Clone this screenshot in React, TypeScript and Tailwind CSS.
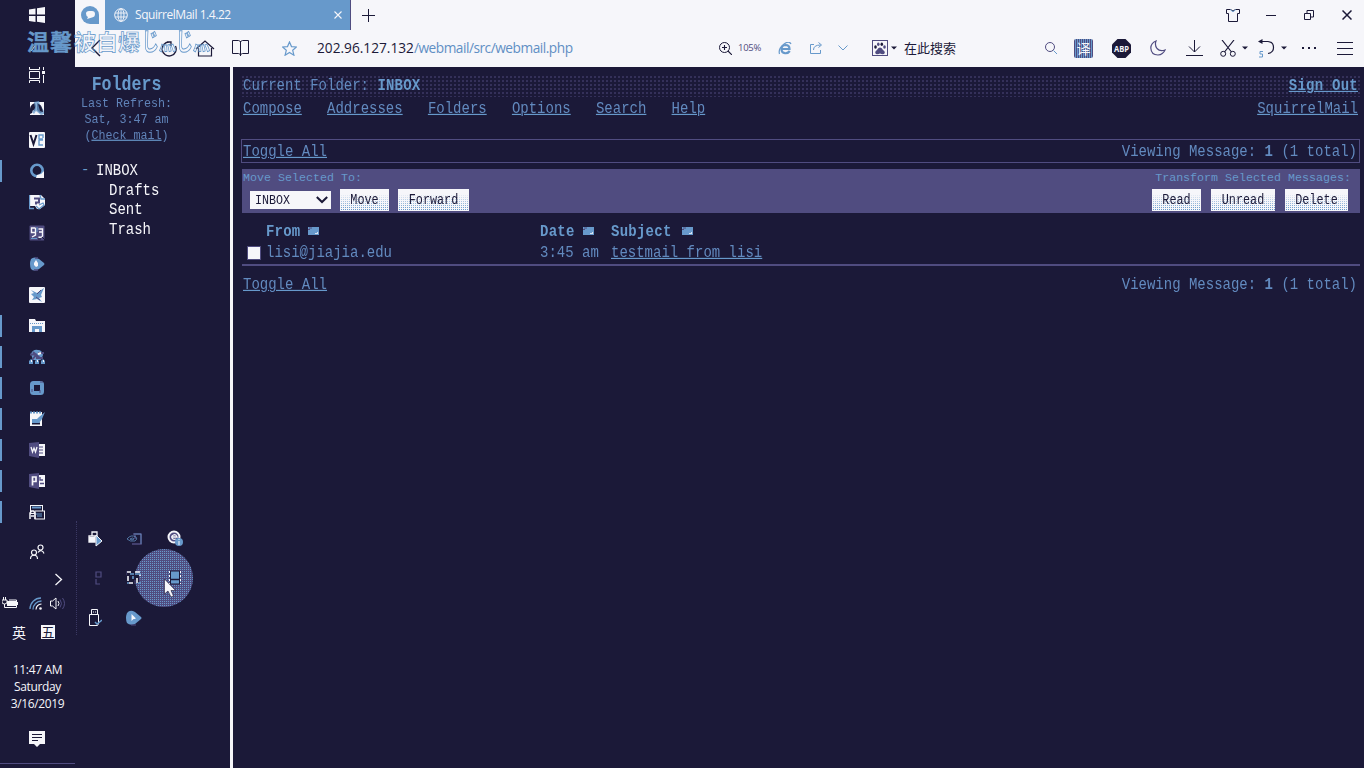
import React from "react";

const B = "#6799cb";
const W = "#f6f6fa";
const P = "#504c80";
const D = "#1b1938";

type MonoProps = { children: React.ReactNode; className?: string };

function Mono({ children, className = "" }: MonoProps) {
  return (
    <span className={`inline-block origin-center scale-y-[1.17] whitespace-pre ${className}`}>{children}</span>
  );
}

function Link({ children }: { children: React.ReactNode }) {
  return <a className="underline decoration-1 underline-offset-1 decoration-[#6799cb]">{children}</a>;
}

function Svg({ children, w = 16, h = 16, vb }: { children: React.ReactNode; w?: number; h?: number; vb?: string }) {
  return (
    <svg width={w} height={h} viewBox={vb ?? `0 0 ${w} ${h}`} fill="none" className="block shrink-0">
      {children}
    </svg>
  );
}

const taskIcons: { bar: boolean; icon: React.ReactNode }[] = [
  {
    bar: false,
    icon: (
      <>
        <rect x="1" y="1" width="14" height="13" fill={W} />
        <path d="M1 9c0-4 2-6 5-7l1 3-1 5-2-1-1 3-2 1z" fill={D} />
        <path d="M8 2c4 1 5 4 6 9l-3 1-3-3z" fill={D} />
        <path d="M5 1l5-1 1 4 4 6v3l-3 1-5-4-2 3-2-2 3-4z" fill={B} opacity=".75" />
        <path d="M9 3c3 1 4 4 5 8l-3-1z" fill={D} />
      </>
    ),
  },
  {
    bar: false,
    icon: (
      <>
        <rect width="16" height="16" rx="1" fill={W} />
        <path d="M1.500 3l3 9 3-9" stroke={D} strokeWidth="2" />
        <path d="M10 7V3h4v3M10 7h4M14 8h-4v5h4" stroke={B} strokeWidth="1.400" />
      </>
    ),
  },
  {
    bar: true,
    icon: (
      <>
        <circle cx="8" cy="7.500" r="5.700" stroke={B} strokeWidth="2.600" />
        <path d="M15 8v7H7l1-3 4-1z" fill={W} />
      </>
    ),
  },
  {
    bar: false,
    icon: (
      <>
        <path d="M0 1h12l4 4v6l-5 4H8l-2-3H0z" fill={W} />
        <path d="M.5 1v14M0 14.500h5M11 1l1 4h4M7 12l3 3 5-4-1-2-4 2" stroke={B} strokeWidth="1.300" />
        <path d="M5 4.500h5v4H7v2" stroke={P} strokeWidth="2" />
      </>
    ),
  },
  {
    bar: false,
    icon: (
      <>
        <rect x="0.500" y="0.500" width="15" height="15" rx="1" fill={P} />
        <path d="M6.500 3h-4v4.500h4V3v7L3 12M9.500 4h4v7q-1 2-4 1M10 7h3" stroke={W} strokeWidth="1.400" />
        <path d="M2 13.500h6M8 2v5" stroke={B} />
        <path d="M13 12l3 3M9 14h3" stroke={D} />
      </>
    ),
  },
  {
    bar: false,
    icon: (
      <>
        <path d="M2 3q3-3 8 0l5 4q1 1 0 2l-5 4q-5 3-8 0-2-5 0-10z" fill={B} />
        <path d="M5 7l2-3 2 3v3l-2 1-2-2z" fill={W} />
        <path d="M5 14h4M6 2h3" stroke={P} strokeWidth="1.500" />
      </>
    ),
  },
  {
    bar: false,
    icon: (
      <>
        <rect width="16" height="16" rx="1" fill={W} />
        <path d="M2 3l6 3 7-5-3 7 1 2-3 1 3 4-5-3-5 1 2-3-3-3 3-1z" fill={B} />
        <path d="M8 7l4-4M7 10l4 3" stroke={P} />
      </>
    ),
  },
  {
    bar: true,
    icon: (
      <>
        <path d="M0 1h6l1 2h9v11H0z" fill={W} />
        <path d="M3 14V8h10v6h-3v-3H6v3z" fill={B} />
        <path d="M1 5.500h14" stroke={B} strokeDasharray="1 1" />
      </>
    ),
  },
  {
    bar: true,
    icon: (
      <>
        <path d="M2 5q2-5 7-4 4 0 5 5l-2 5H4z" fill={B} />
        <path d="M1 5.500h7M9 4h6M4 3l8 7M3 11l4-5M7 9h7" stroke={P} strokeWidth="2" />
        <path d="M0 12l2-2 2 2v3H0zM6 12l2-2 2 2v3H6zM12 12l2-2 2 2v3h-4z" fill={B} />
        <path d="M2 12h1M8 12h1M14 12h1M9 5l3-1" stroke={W} strokeWidth="2" />
      </>
    ),
  },
  {
    bar: true,
    icon: (
      <>
        <rect x="3" y="3" width="10" height="10" rx="1.500" stroke={B} strokeWidth="4" />
        <path d="M11 2h3M3 9v3M11 10v3" stroke={P} />
      </>
    ),
  },
  {
    bar: true,
    icon: (
      <>
        <path d="M1 1h12v14H1z" fill={W} />
        <path d="M1 1.500h12" stroke={B} strokeWidth="2" strokeDasharray="2 1" />
        <path d="M3 11.500h8v2H3z" fill={D} />
        <path d="M3 8h5l2-2 6-5-3 7-3 4H3z" fill={B} />
      </>
    ),
  },
  {
    bar: true,
    icon: (
      <>
        <path d="M0 1l10-1v16L0 14z" fill={P} />
        <rect x="10" y="2" width="6" height="12" fill={W} />
        <path d="M10 5h4M10 8h4M10 11h4" stroke={P} />
        <path d="M2 5l1.500 5L5 6l1.500 4L8 5" stroke={W} strokeWidth="1.300" />
      </>
    ),
  },
  {
    bar: true,
    icon: (
      <>
        <path d="M0 1l10-1v16L0 14z" fill={P} />
        <rect x="10" y="2" width="6" height="12" fill={W} />
        <path d="M11 4v3h3M11 10.500h4" stroke={P} strokeWidth="1.300" />
        <path d="M3.500 12.500V4h3.500v4.500H3.500" stroke={W} strokeWidth="1.700" />
      </>
    ),
  },
  {
    bar: true,
    icon: (
      <>
        <rect x="1.500" y="1.500" width="12" height="8" stroke={W} />
        <path d="M3 3.500h9" stroke={B} strokeWidth="2" />
        <rect x="6" y="7" width="9.500" height="8" fill={D} stroke={W} />
        <path d="M7 10h6M8 12h5" stroke={B} />
        <path d="M1 15V9l1.500-2h2L6 9v6M2 12h3" stroke={W} strokeWidth="1.500" />
      </>
    ),
  },
];

function Taskbar() {
  return (
    <aside className="flex h-[768px] w-[75px] shrink-0 flex-col items-center text-[#f6f6fa]">
      <div className="flex h-[30px] w-full items-center pl-[29px]">
        <Svg>
          <path d="M0 2.500L6.500 1.500v6H0zM8 1.200L16 0v7.500H8zM0 9h6.500v6L0 14zM8 9h8v7l-8-1.200z" fill={W} />
        </Svg>
      </div>
      <div className="flex h-[29px] w-full items-center pl-[29px]">
        <Svg>
          <path d="M6 9l-4 5" stroke={W} />
        </Svg>
      </div>
      <div className="flex h-[34px] w-full items-center pb-[2px] pl-[29px]">
        <Svg>
          <path d="M.5 0v2.500h10V0M.5 16v-2.500h10V16M.5 4.500h10v7H.5zM14.500 0v3M14.500 8v8" stroke={W} />
          <rect x="13" y="4" width="3" height="3" fill={W} />
        </Svg>
      </div>
      {taskIcons.map((t, i) => (
        <div key={i} className="flex h-[31px] w-full items-center">
          <div className={t.bar ? "h-[22px] w-[2px] bg-[#6799cb]" : "h-[22px] w-[2px]"} />
          <div className="ml-[27px]">
            <Svg>{t.icon}</Svg>
          </div>
        </div>
      ))}
      <div className="flex h-[44px] w-full items-center pt-[6px] pl-[30px]">
        <Svg w={15} h={16}>
          <circle cx="4" cy="8.500" r="2.500" stroke={W} strokeWidth="1.200" />
          <circle cx="10.500" cy="3.500" r="2.500" stroke={W} strokeWidth="1.200" />
          <path d="M.5 15c0-5 7-5 7 0M8 8.500c2-3 5-2 6 1" stroke={W} strokeWidth="1.200" />
        </Svg>
      </div>
      <div className="flex h-[16px] w-full items-center pl-[54px]">
        <Svg w={9} h={13}>
          <path d="M1.500 1l6 5.500-6 5.500" stroke={W} strokeWidth="1.300" />
        </Svg>
      </div>
      <div className="flex h-[32px] w-full items-center pl-[2px]">
        <Svg w={16} h={12}>
          <path d="M0 3h5v2a2.500 2 0 01-5 0zM1.500 0v3M3.500 0v3M2.500 7v3.500h12V3H7" stroke={W} />
          <rect x="5" y="4" width="9" height="5" fill={W} />
          <path d="M15.500 5v3" stroke={W} />
        </Svg>
        <div className="ml-[11px]">
          <Svg w={13} h={13}>
            <path d="M1 12A11 11 0 0112 1M4 12.500A8.500 8.500 0 0112.500 4" stroke={B} strokeWidth="1.300" />
            <path d="M7 12.500A6 6 0 0112.500 7" stroke={W} strokeWidth="1.200" />
            <circle cx="11.500" cy="11.500" r="1.300" fill={W} />
          </Svg>
        </div>
        <div className="ml-[8px]">
          <Svg w={16} h={13}>
            <path d="M.5 4h2L6 1v11L2.500 9h-2z" stroke={W} />
            <path d="M8 4q2 2.500 0 5" stroke={W} />
            <path d="M10 2.500q3 4 0 8M12.500 1q4 5.500 0 11" stroke={P} />
          </Svg>
        </div>
      </div>
      <div className="flex h-[26px] w-full items-center pl-[12px] font-['Noto_Sans_CJK_SC',sans-serif] text-[14px] leading-[14px]">
        <span className="w-[14px]">英</span>
        <span className="ml-[15px] flex h-[14px] w-[14px] items-center justify-center bg-[#f6f6fa] text-[13px] text-[#1b1938]">五</span>
      </div>
      <div className="mt-[16px] flex w-full flex-col items-center font-['Open_Sans',sans-serif] text-[12px] leading-[17px] tracking-[-0.35px]">
        <span>11:47 AM</span>
        <span>Saturday</span>
        <span>3/16/2019</span>
      </div>
      <div className="mt-[19px] flex w-full pl-[29px]">
        <Svg w={16} h={16}>
          <path d="M0 0h16v13h-5l-3 3-3-3H0z" fill={W} />
          <path d="M3 3.500h10M3 6.500h10M3 9.500h6" stroke={D} />
        </Svg>
      </div>
      <div className="mt-[16px] h-px w-full bg-[#504c80]" />
    </aside>
  );
}

function Caret() {
  return (
    <Svg w={6} h={4}>
      <path d="M0 .5h6L3 3.500z" fill={D} />
    </Svg>
  );
}

function Chrome() {
  return (
    <header className="flex h-[67px] flex-col bg-[#f6f6fa] font-['Open_Sans',sans-serif] text-[#1b1938]">
      <div className="flex h-[30px] items-center">
        <div className="w-[30px] pl-[6px]">
          <Svg w={18} h={18}>
            <path d="M18 9v9H9A9 9 0 1118 9z" fill={B} />
            <path d="M5 7.500Q5 5 8 5h3q3 0 3 3t-3 3.500L6 13l1-2Q5 10 5 7.500z" fill={W} />
          </Svg>
        </div>
        <div className="flex h-[30px] w-[246px] items-center border-r border-[#504c80] bg-[#6799cb] pl-[9px] text-[#f6f6fa]">
          <Svg w={14} h={14}>
            <circle cx="7" cy="7" r="6.300" stroke={W} />
            <ellipse cx="7" cy="7" rx="3" ry="6.300" stroke={W} />
            <path d="M7 1v12M1 5h12M1 9h12" stroke={W} strokeWidth="0.900" />
          </Svg>
          <span className="ml-[7px] w-[199px] text-[12px] leading-[16px] tracking-[-0.45px]">SquirrelMail 1.4.22</span>
          <Svg w={8} h={8}>
            <path d="M.5.5l7 7M7.500.5l-7 7" stroke={W} strokeWidth="1.100" />
          </Svg>
        </div>
        <div className="ml-[11px]">
          <Svg w={13} h={13}>
            <path d="M6.500 0v13M0 6.500h13" stroke={D} />
          </Svg>
        </div>
        <div className="ml-auto flex items-center">
          <Svg w={14} h={13}>
            <path d="M.5.5h4q2.500 3 5 0h4v4h-2v8h-9v-8h-2z" stroke={D} />
            <path d="M4.500.5q2.500 4 5 0" stroke={B} />
          </Svg>
          <div className="ml-[26px]">
            <Svg w={10} h={11}>
              <path d="M0 5.500h10" stroke={D} />
            </Svg>
          </div>
          <div className="ml-[28px]">
            <Svg w={10} h={10}>
              <path d="M.5 3.500h6v6h-6zM3 3V.5h6.500V7H7" stroke={D} />
            </Svg>
          </div>
          <div className="mr-[12px] ml-[28px]">
            <Svg w={10} h={10}>
              <path d="M.5.5l9 9M9.500.5l-9 9" stroke={D} strokeWidth="1.500" />
            </Svg>
          </div>
        </div>
      </div>
      <div className="flex h-[36px] items-center">
        <div className="ml-[16px]">
          <Svg w={10} h={18}>
            <path d="M9 1L1 9l8 8" stroke={D} strokeWidth="1.400" />
          </Svg>
        </div>
        <div className="ml-[60px]">
          <Svg w={16} h={17}>
            <path d="M8.500 2a7 7 0 106 4M6 2h4v4" stroke={D} strokeWidth="1.300" />
          </Svg>
        </div>
        <div className="ml-[18px]">
          <Svg w={20} h={18}>
            <path d="M1 10l9-8 9 8M3.500 9v8h13V9" stroke={D} strokeWidth="1.200" />
          </Svg>
        </div>
        <div className="ml-[17px]">
          <Svg w={17} h={16}>
            <path d="M.5.5h6l2 1 2-1h6v13h-6l-2 1-2-1h-6zM8.500 1v15" stroke={D} />
          </Svg>
        </div>
        <div className="ml-[33px]">
          <Svg w={15} h={15} vb="0 0 15 15">
            <path d="M7.500 1l2 4.600 5 .4-3.800 3.300 1.200 4.900-4.400-2.700-4.400 2.700 1.200-4.900L.5 6l5-.4z" stroke={B} strokeWidth="1.200" />
          </Svg>
        </div>
        <span className="ml-[20px] w-[402px] text-[13.700px] leading-[18px] whitespace-nowrap">
          202.96.127.132<span className="tracking-[-0.480px] text-[#5f8fc4]">/webmail/src/webmail.php</span>
        </span>
        <Svg w={13} h={13}>
          <circle cx="5.500" cy="5.500" r="5" stroke={D} />
          <path d="M9 9l4 4M3 5.500h5M5.500 3v5" stroke={D} strokeWidth="1.100" />
        </Svg>
        <span className="ml-[6px] w-[40px] text-[9.500px] leading-[12px] tracking-[-0.3px] text-[#504c80]">105%</span>
        <Svg w={14} h={13}>
          <path d="M11.800 9Q10 11.500 7 11.200 3.500 10.700 3.500 7T7.500 3q4 0 4 4H4" stroke={B} strokeWidth="2.200" />
          <path d="M1.500 12Q0 7 5.500 2.500T13 2" stroke={B} strokeWidth="1.200" />
        </Svg>
        <div className="ml-[18px]">
          <Svg w={12} h={12}>
            <path d="M4 2.500H.5v9h10V8M3.500 8q0-5 7-5M8.500.5l3 2.500-3 2.500" stroke={B} />
          </Svg>
        </div>
        <div className="ml-[16px]">
          <Svg w={10} h={6}>
            <path d="M.5.5L5 5 9.500.5" stroke={B} />
          </Svg>
        </div>
        <div className="ml-[24px]">
          <Svg w={16} h={16}>
            <rect x=".5" y=".5" width="15" height="15" stroke={P} />
            <path d="M4 14q-2-2 1-4 1-2.500 3-2.500t3 2.500q3 2 1 4-2 .5-4-.5-2 1-4 .5z" fill={P} />
            <ellipse cx="3.500" cy="7" rx="1.300" ry="1.700" fill={D} />
            <ellipse cx="6.300" cy="4.200" rx="1.300" ry="1.800" fill={P} />
            <ellipse cx="9.800" cy="4.200" rx="1.300" ry="1.800" fill={D} />
            <ellipse cx="12.500" cy="7" rx="1.300" ry="1.700" fill={P} />
          </Svg>
        </div>
        <div className="ml-[3px]"><Caret /></div>
        <span className="ml-[7px] w-[141px] font-['Noto_Sans_CJK_SC',sans-serif] text-[13px] leading-[18px]">在此搜索</span>
        <Svg w={12} h={13}>
          <circle cx="5" cy="5" r="4.500" stroke={P} />
          <path d="M8.500 8.500L12 12" stroke={B} />
        </Svg>
        <div className="ml-[17px] flex h-[19px] w-[19px] items-center justify-center rounded-[2px] bg-[#504c80] bg-[conic-gradient(#6799cb_50%,transparent_0)] bg-[size:2px_2px] font-['Noto_Sans_CJK_SC',sans-serif] text-[14px] leading-[18px] text-[#f6f6fa]">译</div>
        <div className="ml-[19px]">
          <Svg w={19} h={19}>
            <path d="M5.500 0h8L19 5.500v8L13.500 19h-8L0 13.500v-8z" fill={D} />
            <text x="9.500" y="13" textAnchor="middle" fontSize="9" fontWeight="700" fontFamily="Open Sans, sans-serif" textLength="15" lengthAdjust="spacingAndGlyphs" fill={W}>ABP</text>
          </Svg>
        </div>
        <div className="ml-[19px]">
          <Svg w={16} h={16}>
            <path d="M6 1Q1 3 .8 8q.4 7 7.200 7 5-.3 7-5-5 2-8-1.500Q4.500 5 6 1z" stroke={P} strokeWidth="1.200" />
          </Svg>
        </div>
        <div className="ml-[20px]">
          <Svg w={17} h={16}>
            <path d="M8.500 0v12M3 6.500L8.500 12 14 6.500M0 15.500h17" stroke={D} />
          </Svg>
        </div>
        <div className="ml-[17px]">
          <Svg w={16} h={17}>
            <path d="M2 0l9.500 12M14 0L4.500 12" stroke={D} strokeWidth="1.200" />
            <circle cx="3.200" cy="13.800" r="2.500" stroke={D} />
            <circle cx="12.800" cy="13.800" r="2.500" stroke={D} />
          </Svg>
        </div>
        <div className="ml-[6px]"><Caret /></div>
        <div className="ml-[10px]">
          <Svg w={17} h={19}>
            <path d="M2 2.500h8q5.500.5 5.500 6 0 5-5.500 6" stroke={D} strokeWidth="1.200" />
            <path d="M0 2.500L4.500 0v5z" fill={D} />
            <path d="M5 12.500H2V15h2.500v3H1" stroke={B} />
          </Svg>
        </div>
        <div className="ml-[6px]"><Caret /></div>
        <div className="ml-[15px]">
          <Svg w={14} h={3}>
            <path d="M0 0h2v2H0zM6 0h2v2H6zM12 0h2v2h-2z" fill={D} />
          </Svg>
        </div>
        <div className="ml-[21px]">
          <Svg w={16} h={13}>
            <path d="M0 .5h16M0 6.500h16M0 12.500h16" stroke={D} />
          </Svg>
        </div>
      </div>
    </header>
  );
}

function Tray() {
  return (
    <div className="mt-[282px] ml-px grid h-[114px] w-[119px] grid-cols-[39px_39px_40px] grid-rows-[35px_43px_37px] border-l border-dotted border-[#504c80]/60">
      <div className="flex items-center justify-center pr-[2px]">
        <Svg>
          <path d="M4 1h5v4H4zM1 5h6v6H1z" stroke={W} strokeWidth="1.300" />
          <rect x="1" y="6" width="6" height="5" fill={W} />
          <path d="M8 4l6 6-6 5z" fill={B} stroke={W} />
        </Svg>
      </div>
      <div className="flex items-center justify-center pr-[3px]">
        <Svg>
          <path d="M7 3h8v10H6M9 4v4" stroke={P} strokeWidth="1.500" />
          <path d="M1 8q4-5 9-2 2 2-1 4-5 1-8-2zM4 8q3-2 4 0-2 2-4 0zM8 3h7v10" stroke={B} strokeWidth=".7" />
        </Svg>
      </div>
      <div className="flex items-center justify-center pr-px pb-px">
        <Svg>
          <circle cx="7" cy="7" r="5.500" fill={P} stroke={W} strokeWidth="2" />
          <path d="M5 7h5q-1-3-3.500-2T5 8q1 2 4 1" stroke={W} strokeWidth="1.300" />
          <circle cx="12" cy="12" r="4" fill={B} />
          <path d="M12 9v1M12 11v4" stroke={W} />
        </Svg>
      </div>
      <div className="flex items-center justify-end pr-[13px]">
        <Svg w={10} h={14}>
          <path d="M3 1h5v5H3zM3 8v5h4M8 1v4" stroke={P} strokeWidth="1.200" />
        </Svg>
      </div>
      <div className="z-10 flex items-center justify-center pr-[3px]">
        <Svg>
          <rect x="3" y="3" width="10" height="10" fill={D} />
          <path d="M1 2h4M9 2h5M3 13h4M13 5h2M2 6v5M11 8v5" stroke={W} strokeWidth="1.600" />
          <path d="M4 4h4M7 6v3M9 4h6M12 13h3M1 13h2" stroke={B} strokeWidth="1.600" />
          <path d="M0 1v4M9 10v4M15 8v4" stroke={P} />
        </Svg>
      </div>
      <div className="relative flex items-center justify-center pr-px">
        <div className="absolute top-[-7px] left-[-20px] h-[58px] w-[58px] rounded-full bg-[#504c80] bg-[conic-gradient(#6799cb_25%,transparent_0)] bg-[size:2px_2px]" />
        <div className="relative">
          <Svg w={12} h={15}>
            <rect x="1.500" y="1" width="9" height="13" fill={B} stroke={D} />
            <path d="M.5 1v13M11.500 1v13" stroke={W} strokeDasharray="2 2" />
            <path d="M2 9.500h8" stroke={D} strokeWidth="1.500" />
          </Svg>
        </div>
        <div className="absolute top-[23px] left-[9px] z-20">
          <Svg w={12} h={19}>
            <path d="M.5 0v15l3.500-3 3 6 2.500-1-2.500-5.500h4.500z" fill={W} stroke={D} strokeWidth=".6" />
          </Svg>
        </div>
      </div>
      <div className="flex items-center justify-center pr-[3px]">
        <Svg w={14} h={17}>
          <path d="M3.500 5.500v-5h6v5M1.500 5.500h9v9l-1 2h-8z" stroke={W} />
          <path d="M5 3h1M7 3h1" stroke={W} />
          <path d="M7 13l2 2 5-4" stroke={B} strokeWidth="1.500" />
        </Svg>
      </div>
      <div className="flex items-center justify-center pr-[3px]">
        <Svg>
          <path d="M1 3q3-4 8-1l6 5q1 1 0 2l-6 5q-5 2-8-1-2-5 0-10z" fill={B} />
          <path d="M5.500 4v7l2-2h2V8z" fill={W} />
          <path d="M5 15h5" stroke={P} />
        </Svg>
      </div>
    </div>
  );
}

function FolderFrame() {
  return (
    <nav className="flex h-[701px] w-[155px] shrink-0 flex-col text-[14px] text-[#6799cb]">
      <div className="mt-[7px] w-[103px] text-center">
        <div className="text-[16.600px] leading-[21px] font-bold"><Mono>Folders</Mono></div>
        <div className="text-[11.700px] leading-[16px] text-[#6083b8]">
          <div><Mono>Last Refresh:</Mono></div>
          <div><Mono>Sat, 3:47 am</Mono></div>
          <div><Mono>(<Link>Check mail</Link>)</Mono></div>
        </div>
      </div>
      <div className="mt-[18px] flex flex-col leading-[19.500px] text-[#f6f6fa]">
        <div className="flex pl-[6px]">
          <span className="w-[15px] text-[#6799cb]">-</span>
          <Mono>INBOX</Mono>
        </div>
        <div className="pl-[34px]"><Mono>Drafts</Mono></div>
        <div className="pl-[34px]"><Mono>Sent</Mono></div>
        <div className="pl-[34px]"><Mono>Trash</Mono></div>
      </div>
      <Tray />
    </nav>
  );
}

function Btn({ children, className }: { children: React.ReactNode; className: string }) {
  return (
    <button className={`relative flex h-[22px] items-center justify-center bg-[#f6f6fa] text-[11.800px] text-[#1b1938] ${className}`}>
      <span className="absolute inset-0 bg-[conic-gradient(#6799cb_25%,transparent_0)] bg-[size:2px_2px] [mask-image:linear-gradient(to_bottom,transparent_20%,#000_90%)]" />
      <Mono className="relative">{children}</Mono>
    </button>
  );
}

function SortIcon() {
  return (
    <Svg w={11} h={8}>
      <rect width="11" height="8" fill={B} />
      <path d="M1 1h3M0 2.500h2" stroke={P} />
      <path d="M9.500 5v2M7 6.500h2" stroke={W} strokeWidth=".8" />
    </Svg>
  );
}

function ToggleRow() {
  return (
    <>
      <Mono><Link>Toggle All</Link></Mono>
      <Mono>Viewing Message: <b>1</b> (1 total)</Mono>
    </>
  );
}

function MailFrame() {
  return (
    <main className="flex h-[701px] min-w-0 flex-1 flex-col pr-[4px] pl-[8px] text-[14px] leading-[20px] text-[#628abf]">
      <div className="mt-[8px] flex h-[22px] items-center justify-between bg-[radial-gradient(circle,#504c80_0.6px,transparent_0.8px)] bg-[size:4px_4px] pr-[2px] pb-[2px] pl-[2px]">
        <Mono>Current Folder: <b className="tracking-[0.2px] text-[#6799cb]">INBOX</b></Mono>
        <Mono className="font-bold tracking-[0.250px] text-[#6799cb]"><Link>Sign Out</Link></Mono>
      </div>
      <div className="flex h-[24px] items-center justify-between pr-[2px] pb-[2px] pl-[2px]">
        <Mono>
          <Link>Compose</Link>{"   "}<Link>Addresses</Link>{"   "}<Link>Folders</Link>{"   "}<Link>Options</Link>{"   "}<Link>Search</Link>{"   "}<Link>Help</Link>
        </Mono>
        <Mono><Link>SquirrelMail</Link></Mono>
      </div>
      <div className="mt-[18px] flex h-[24px] items-center justify-between border border-[#504c80] pr-[2px] pl-px">
        <ToggleRow />
      </div>
      <div className="mt-[6px] ml-px flex h-[44px] flex-col bg-[#504c80]">
        <div className="flex h-[19px] items-center justify-between pr-[9px] pb-px pl-px text-[11.670px] text-[#6799cb]">
          <span>Move Selected To:</span>
          <span>Transform Selected Messages:</span>
        </div>
        <div className="flex h-[23px] items-center pr-[12px] pl-[8px]">
          <div className="flex h-[18px] w-[81px] items-center justify-between bg-[#f6f6fa] pr-[3px] pl-[5px] text-[11.670px] text-[#1b1938]">
            <Mono>INBOX</Mono>
            <Svg w={12} h={8}>
              <path d="M.8 1L6 6l5.200-5" stroke={D} strokeWidth="2" />
            </Svg>
          </div>
          <Btn className="ml-[9px] w-[49px]">Move</Btn>
          <Btn className="ml-[9px] w-[71px]">Forward</Btn>
          <Btn className="ml-auto w-[49px]">Read</Btn>
          <Btn className="ml-[10px] w-[64px]">Unread</Btn>
          <Btn className="ml-[10px] w-[63px]">Delete</Btn>
        </div>
      </div>
      <div className="mt-[7px] ml-px grid grid-cols-[24px_274px_71px_1fr] grid-rows-[21px_22px] items-center border-b-2 border-[#504c80] pb-px">
        <span />
        <div className="flex items-center gap-[8px] font-bold tracking-[0.2px] text-[#6799cb]"><Mono>From</Mono><SortIcon /></div>
        <div className="flex items-center gap-[8px] font-bold tracking-[0.250px] text-[#6799cb]"><Mono>Date</Mono><SortIcon /></div>
        <div className="flex items-center gap-[10px] font-bold tracking-[0.250px] text-[#6799cb]"><Mono>Subject</Mono><SortIcon /></div>
        <div className="flex items-center pl-[5px]">
          <div className="mt-[2px] h-[14px] w-[14px] border border-[#504c80] bg-[#f6f6fa]" />
        </div>
        <Mono>lisi@jiajia.edu</Mono>
        <Mono>3:45 am</Mono>
        <Mono><Link>testmail from lisi</Link></Mono>
      </div>
      <div className="mt-[6px] flex h-[24px] items-center justify-between pr-[3px] pl-[2px]">
        <ToggleRow />
      </div>
    </main>
  );
}

export default function App() {
  return (
    <div className="relative flex h-[768px] w-[1364px] overflow-hidden bg-[#1b1938]">
      <Taskbar />
      <div className="flex min-w-0 flex-1 flex-col">
        <Chrome />
        <div className="flex flex-1 font-['Liberation_Mono',monospace]">
          <FolderFrame />
          <div className="w-[3px] shrink-0 bg-[#f6f6fa]" />
          <MailFrame />
        </div>
      </div>
      <div className="pointer-events-none absolute top-[28px] left-[27px] flex h-[24px] items-center font-['Noto_Sans_CJK_SC',sans-serif] text-[22px] leading-[24px] font-bold whitespace-nowrap text-transparent [-webkit-text-stroke:0.7px_#6799cb]">
        <span className="w-[23px] font-medium text-[#6799cb]">温</span>
        <span className="w-[24px] font-medium text-[#6799cb]">馨</span>
        <span className="w-[22px]">被</span>
        <span className="w-[22px]">自</span>
        <span className="w-[24px]">爆</span>
        <span className="w-[68px] scale-y-[1.4] text-[17px]">じ灬じ灬</span>
      </div>
    </div>
  );
}
